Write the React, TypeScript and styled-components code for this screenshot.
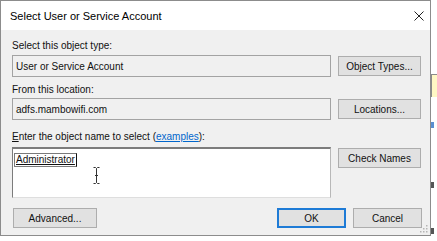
import React from "react";
import styled, { createGlobalStyle } from "styled-components";

const GlobalStyle = createGlobalStyle`
  html, body { margin: 0; padding: 0; background: #ffffff; }
  body { font-family: "Liberation Sans", Arial, sans-serif; color: #111; }
  * { box-sizing: border-box; }
`;

const Page = styled.div`
  width: 437px;
  height: 241px;
  display: flex;
  overflow: hidden;
  background: #ffffff;
`;

const Dialog = styled.div`
  position: relative;
  flex-shrink: 0;
  width: 431px;
  height: 236px;
  border: 1px solid #8c8c8c;
  background: #f0f0f0;
  display: flex;
  flex-direction: column;
`;

const TitleBar = styled.div`
  height: 29px;
  background: #ffffff;
  display: flex;
  align-items: center;
  justify-content: space-between;
  padding: 0 6px 0 9px;
  font-size: 11px;
  color: #000;
`;

const CloseGlyph = styled.svg`
  width: 10px;
  height: 10px;
  margin-top: 0px;
`;

const Body = styled.div`
  flex: 1;
  display: flex;
  flex-direction: column;
  padding: 8px 8px 0 11px;
`;

const Label = styled.div<{ $top: number }>`
  margin-top: ${(p) => p.$top}px;
  height: 16px;
  line-height: 16px;
  font-size: 10px;
  color: #111;
  white-space: nowrap;
`;

const AccessKey = styled.span`
  text-decoration: underline;
`;

const Link = styled.span`
  color: #0066cc;
  text-decoration: underline;
`;

const Row = styled.div<{ $top: number; $align?: string }>`
  margin-top: ${(p) => p.$top}px;
  display: flex;
  align-items: ${(p) => p.$align ?? "center"};
  gap: 7px;
`;

const ReadOnlyField = styled.div`
  width: 319px;
  height: 22px;
  border: 1px solid #a3a3a3;
  background: #f0f0f0;
  padding-left: 3px;
  display: flex;
  align-items: center;
  font-size: 10px;
  color: #111;
  white-space: nowrap;
`;

const Button = styled.div<{ $w?: number; $default?: boolean; $top?: number }>`
  width: ${(p) => p.$w ?? 83}px;
  height: 20px;
  margin-top: ${(p) => p.$top ?? 0}px;
  background: #e1e1e1;
  border: ${(p) => (p.$default ? "2px solid #1e7bd6" : "1px solid #adadad")};
  display: flex;
  align-items: center;
  justify-content: center;
  font-size: 10px;
  color: #111;
  white-space: nowrap;
`;

const TextArea = styled.div`
  position: relative;
  width: 319px;
  height: 51px;
  background: #ffffff;
  border-top: 2px solid #7c7c7c;
  border-left: 1px solid #7c7c7c;
  border-right: 1px solid #b8b8b8;
  border-bottom: 1px solid #dedede;
  padding: 0 0 0 1px;
`;

const NameToken = styled.span`
  display: inline-block;
  font-size: 10px;
  line-height: 12px;
  padding: 0 1px 0 1px;
  border: 1px solid #7a7a7a;
  border-right: 1px solid #111;
  text-decoration: underline;
  color: #111;
`;

const IBeam = styled.svg`
  position: absolute;
  left: 80px;
  top: 18px;
  width: 7px;
  height: 17px;
`;

const ButtonBar = styled.div`
  margin-top: 10px;
  display: flex;
  align-items: center;
  padding-left: 1px;
`;

const Spacer = styled.div`
  flex: 1;
`;

const ButtonGap = styled.div`
  width: 7px;
`;

const Grip = styled.svg`
  position: absolute;
  right: 2px;
  bottom: 2px;
  width: 9px;
  height: 9px;
`;

const Backdrop = styled.div`
  flex: 1;
  display: flex;
  flex-direction: column;
  background: #ffffff;
`;

const Note = styled.div`
  margin-top: 74px;
  height: 23px;
  background: #fff7c4;
  border-top: 1px solid #8a8a8a;
  border-left: 1px solid #8a8a8a;
`;

const Fragment = styled.div<{ $top: number; $color: string }>`
  margin-top: ${(p) => p.$top}px;
  width: 3px;
  height: 6px;
  background: ${(p) => p.$color};
`;

export default function App() {
  return (
    <>
      <GlobalStyle />
      <Page>
        <Dialog>
          <TitleBar>
            <span>Select User or Service Account</span>
            <CloseGlyph viewBox="0 0 10 10">
              <path d="M0.5 0.5 L9.5 9.5 M9.5 0.5 L0.5 9.5" stroke="#222" strokeWidth="1" />
            </CloseGlyph>
          </TitleBar>
          <Body>
            <Label $top={0}>Select this object type:</Label>
            <Row $top={1}>
              <ReadOnlyField>User or Service Account</ReadOnlyField>
              <Button>Object Types...</Button>
            </Row>
            <Label $top={5}>From this location:</Label>
            <Row $top={0}>
              <ReadOnlyField>adfs.mambowifi.com</ReadOnlyField>
              <Button>Locations...</Button>
            </Row>
            <Label $top={9}>
              <AccessKey>E</AccessKey>nter the object name to select (<Link>examples</Link>):
            </Label>
            <Row $top={2} $align="flex-start">
              <TextArea>
                <NameToken>Administrator</NameToken>
                <IBeam viewBox="0 0 7 17">
                  <path d="M0.5 0.5 H2.5 L3.5 1.5 L4.5 0.5 H6.5 M3.5 1.5 V15.5 M0.5 16.5 H2.5 L3.5 15.5 L4.5 16.5 H6.5 M2 8.5 H5" stroke="#333" strokeWidth="1" fill="none" />
                </IBeam>
              </TextArea>
              <Button $top={1}>Check Names</Button>
            </Row>
            <ButtonBar>
              <Button $w={84}>Advanced...</Button>
              <Spacer />
              <Button $w={69} $default>OK</Button>
              <ButtonGap />
              <Button $w={69}>Cancel</Button>
            </ButtonBar>
          </Body>
          <Grip viewBox="0 0 9 9">
            <rect x="7" y="1" width="1.5" height="1.5" fill="#b5b5b5" />
            <rect x="4" y="4" width="1.5" height="1.5" fill="#b5b5b5" />
            <rect x="7" y="4" width="1.5" height="1.5" fill="#b5b5b5" />
            <rect x="1" y="7" width="1.5" height="1.5" fill="#b5b5b5" />
            <rect x="4" y="7" width="1.5" height="1.5" fill="#b5b5b5" />
            <rect x="7" y="7" width="1.5" height="1.5" fill="#b5b5b5" />
          </Grip>
        </Dialog>
        <Backdrop>
          <Note />
          <Fragment $top={25} $color="#5a8fd0" />
          <Fragment $top={54} $color="#555" />
          <Fragment $top={40} $color="#555" />
        </Backdrop>
      </Page>
    </>
  );
}
